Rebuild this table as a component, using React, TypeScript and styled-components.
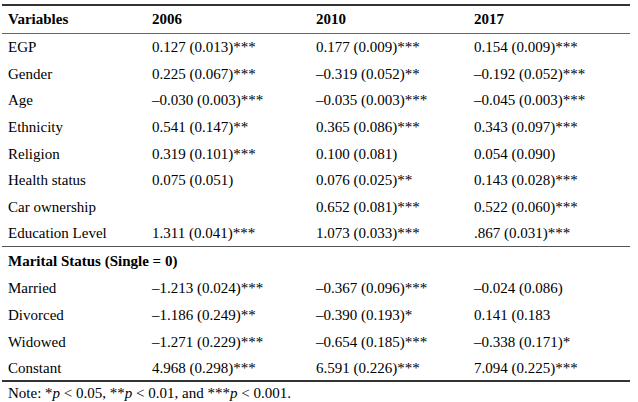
import React from 'react';
import styled, { createGlobalStyle } from 'styled-components';

const GlobalStyle = createGlobalStyle`
  html, body {
    margin: 0;
    padding: 0;
    background: #fff;
  }
`;

const Page = styled('div')`
  padding: 4px 0 0 2px;
  font-family: "Liberation Serif", "Times New Roman", serif;
  font-size: 15px;
  color: #000;
`;

const Table = styled('table')`
  width: 628px;
  border-collapse: collapse;
  table-layout: fixed;
  border-top: 2px solid #333;
  border-bottom: 2px solid #333;
`;

const HeadRow = styled('tr')`
  height: 28px;
  border-bottom: 1px solid #666;
`;

const Row = styled('tr')<{ $rule?: boolean }>`
  height: 26.7px;
  ${(p) => (p.$rule ? 'border-top: 1px solid #555; height: 28px;' : '')}
`;

const Th = styled('th')`
  padding: 0 0 0 6px;
  text-align: left;
  font-weight: bold;
  white-space: nowrap;
`;

const Td = styled('td')<{ $bold?: boolean }>`
  padding: 2px 0 0 6px;
  text-align: left;
  white-space: nowrap;
  font-weight: ${(p) => (p.$bold ? 'bold' : 'normal')};
`;

const Note = styled('p')`
  margin: 0;
  padding: 2px 0 0 6px;
  line-height: 18px;
`;

const P = styled('i')``;

type Line = [string, string, string, string];

const main: Line[] = [
  ['EGP', '0.127 (0.013)***', '0.177 (0.009)***', '0.154 (0.009)***'],
  ['Gender', '0.225 (0.067)***', '–0.319 (0.052)**', '–0.192 (0.052)***'],
  ['Age', '–0.030 (0.003)***', '–0.035 (0.003)***', '–0.045 (0.003)***'],
  ['Ethnicity', '0.541 (0.147)**', '0.365 (0.086)***', '0.343 (0.097)***'],
  ['Religion', '0.319 (0.101)***', '0.100 (0.081)', '0.054 (0.090)'],
  ['Health status', '0.075 (0.051)', '0.076 (0.025)**', '0.143 (0.028)***'],
  ['Car ownership', '', '0.652 (0.081)***', '0.522 (0.060)***'],
  ['Education Level', '1.311 (0.041)***', '1.073 (0.033)***', '.867 (0.031)***'],
];

const marital: Line[] = [
  ['Married', '–1.213 (0.024)***', '–0.367 (0.096)***', '–0.024 (0.086)'],
  ['Divorced', '–1.186 (0.249)**', '–0.390 (0.193)*', '0.141 (0.183'],
  ['Widowed', '–1.271 (0.229)***', '–0.654 (0.185)***', '–0.338 (0.171)*'],
  ['Constant', '4.968 (0.298)***', '6.591 (0.226)***', '7.094 (0.225)***'],
];

function DataRow({ line }: { line: Line }) {
  return (
    <Row>
      {line.map((c, i) => <Td key={i}>{c}</Td>)}
    </Row>
  );
}

export default function App() {
  return (
    <Page>
      <GlobalStyle />
      <Table>
        <colgroup>
          <col style={{ width: 144 }} />
          <col style={{ width: 164 }} />
          <col style={{ width: 158 }} />
          <col style={{ width: 162 }} />
        </colgroup>
        <thead>
          <HeadRow>
            <Th>Variables</Th>
            <Th>2006</Th>
            <Th>2010</Th>
            <Th>2017</Th>
          </HeadRow>
        </thead>
        <tbody>
          {main.map((l) => <DataRow key={l[0]} line={l} />)}
          <Row $rule>
            <Td $bold colSpan={4}>Marital Status (Single = 0)</Td>
          </Row>
          {marital.map((l) => <DataRow key={l[0]} line={l} />)}
        </tbody>
      </Table>
      <Note>
        Note: *<P>p</P> &lt; 0.05, **<P>p</P> &lt; 0.01, and ***<P>p</P> &lt; 0.001.
      </Note>
    </Page>
  );
}
